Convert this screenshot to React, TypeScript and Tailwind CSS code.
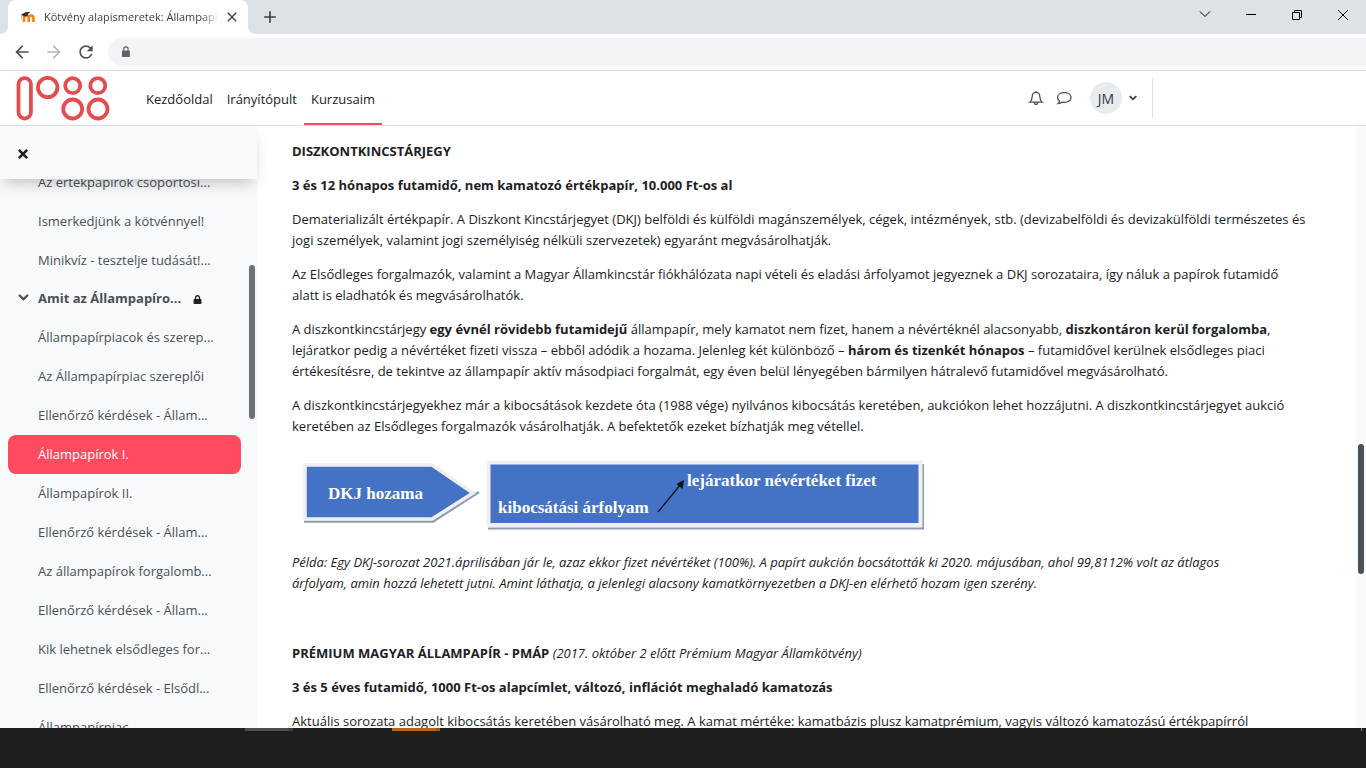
import { FaChevronDown, FaLock, FaTimes } from "react-icons/fa";
import { MdAdd, MdArrowBack, MdArrowForward, MdClose, MdRefresh } from "react-icons/md";

const lessons = [
  { title: "Az értékpapírok csoportosí..." },
  { title: "Ismerkedjünk a kötvénnyel!" },
  { title: "Minikvíz - tesztelje tudását!..." },
  { title: "Amit az Állampapíro...", section: true },
  { title: "Állampapírpiacok és szerep..." },
  { title: "Az Állampapírpiac szereplői" },
  { title: "Ellenőrző kérdések - Állam..." },
  { title: "Állampapírok I.", active: true },
  { title: "Állampapírok II." },
  { title: "Ellenőrző kérdések - Állam..." },
  { title: "Az állampapírok forgalomb..." },
  { title: "Ellenőrző kérdések - Állam..." },
  { title: "Kik lehetnek elsődleges for..." },
  { title: "Ellenőrző kérdések - Elsődl..." },
  { title: "Állampapírpiac" },
];

function TabStrip() {
  return (
    <div className="flex h-[34px] shrink-0 items-end bg-[#dee1e6]">
      <span className="h-2 w-2 bg-white">
        <span className="block h-2 w-2 rounded-br-lg bg-[#dee1e6]" />
      </span>
      <div className="flex h-[34px] w-60 items-center rounded-t-lg bg-white pl-3 pr-1">
        <svg viewBox="0 0 16 16" className="h-4 w-4 shrink-0">
          <path d="M4 13V8.800a2.300 2.300 0 0 1 4.700 0V13M8.700 8.800a2.300 2.300 0 0 1 4.700 0V13" fill="none" stroke="#f98012" strokeWidth="2.6" />
          <path d="M1 5.500 6 3 10.500 3 8 5 7.500 7 4 7.500z" fill="#333" />
          <path d="M1.500 6v4" stroke="#b9a68c" strokeWidth="0.8" />
        </svg>
        <span className="ml-2 w-[175px] overflow-hidden whitespace-nowrap text-[11px] text-[#3c4043] [mask-image:linear-gradient(to_right,black_90%,transparent)]">
          Kötvény alapismeretek: Állampapírok
        </span>
        <button aria-label="Lap bezárása" className="ml-[3px] flex h-5 w-5 items-center justify-center text-[#3c4043]">
          <MdClose size={16} />
        </button>
      </div>
      <span className="h-2 w-2 bg-white">
        <span className="block h-2 w-2 rounded-bl-lg bg-[#dee1e6]" />
      </span>
      <button aria-label="Új lap" className="flex h-[34px] w-7 items-center justify-center text-[#3c4043]">
        <MdAdd size={20} />
      </button>
      <div className="ml-auto flex h-7 text-black">
        <button aria-label="Lapok keresése" className="flex w-[46px] justify-center pt-1">
          <svg viewBox="0 0 12 12" className="h-3 w-3" fill="none" stroke="currentColor"><path d="M1 1.5 6 6.5 11 1.5" /></svg>
        </button>
        <button aria-label="Kis méret" className="flex w-[46px] justify-center pt-1">
          <svg viewBox="0 0 12 12" className="h-3 w-3" fill="none" stroke="currentColor"><path d="M1 4.5H11" /></svg>
        </button>
        <button aria-label="Előző méret" className="flex w-[46px] justify-center pt-1">
          <svg viewBox="0 0 12 12" className="h-3 w-3" fill="none" stroke="currentColor"><path d="M1.5 2.5h7v7h-7zM3.5 2.5v-2h7v7h-2" /></svg>
        </button>
        <button aria-label="Bezárás" className="flex w-[46px] justify-center pt-1">
          <svg viewBox="0 0 12 12" className="h-3 w-3" fill="none" stroke="currentColor"><path d="M1 0 11 10M11 0 1 10" /></svg>
        </button>
      </div>
    </div>
  );
}

function AddressBar() {
  return (
    <div className="flex h-[37px] shrink-0 items-center border-b border-[#dadce0] bg-white pl-3">
      <button aria-label="Vissza" className="mr-3 text-[#4f5358]"><MdArrowBack size={20} /></button>
      <button aria-label="Előre" className="mr-3 text-[#b4b8bd]"><MdArrowForward size={20} /></button>
      <button aria-label="Újratöltés" className="mr-3 text-[#4f5358]"><MdRefresh size={20} /></button>
      <label className="flex h-7 flex-1 items-center rounded-l-full bg-[#f1f3f4] pl-3 text-[#5f6368]">
        <svg viewBox="0 0 12 12" className="h-3 w-3" fill="none" stroke="currentColor">
          <rect x="2" y="4.500" width="8" height="6.500" rx="0.500" fill="currentColor" stroke="none" />
          <path d="M3.800 5V3a2.200 2.200 0 0 1 4.400 0v2" strokeWidth="1.200" />
        </svg>
        <input aria-label="Címsor" className="ml-2 w-full bg-transparent text-xs outline-none" />
      </label>
    </div>
  );
}

function Logo() {
  return (
    <svg viewBox="0 0 94 46" className="h-[46px] w-[94px]" fill="none" stroke="#e34d50" strokeWidth="3.8">
      <rect x="2.5" y="3.100" width="12.400" height="40.400" rx="6.200" />
      <circle cx="31.7" cy="12.500" r="9.700" />
      <circle cx="56.7" cy="10.700" r="7.500" />
      <circle cx="81.8" cy="10.700" r="7.500" />
      <circle cx="56.7" cy="34" r="9.500" />
      <circle cx="82" cy="34" r="9.500" />
    </svg>
  );
}

function Navbar() {
  return (
    <header className="flex h-[55px] shrink-0 items-stretch border-b border-[#dee2e6] bg-white">
      <a href="#" aria-label="1088" className="flex items-center pl-4"><Logo /></a>
      <nav className="ml-[29px] flex text-[13px] text-[#1d2125]">
        <a href="#" className="flex items-center border-b-2 border-transparent px-[7px] pt-[6px]">Kezdőoldal</a>
        <a href="#" className="flex items-center border-b-2 border-transparent px-[7px] pt-[6px]">Irányítópult</a>
        <a href="#" className="flex items-center border-b-2 border-[#ff4a5f] px-[7px] pt-[6px]">Kurzusaim</a>
      </nav>
      <div className="ml-auto mr-[213px] flex items-center">
        <button aria-label="Értesítések" className="text-[#495057]">
          <svg viewBox="0 0 16 16" className="h-4 w-4" fill="none" stroke="currentColor" strokeWidth="1.3">
            <path d="M8 1v1.3M1.8 12.2h12.4C12.2 10.600 11.900 9 11.800 6.500 11.700 4 10.200 2.400 8 2.400S4.300 4 4.200 6.500C4.100 9 3.800 10.600 1.800 12.200zM6.300 12.800a1.700 1.700 0 0 0 3.400 0" />
          </svg>
        </button>
        <button aria-label="Üzenetek" className="ml-3 text-[#495057]">
          <svg viewBox="0 0 16 16" className="h-4 w-4" fill="none" stroke="currentColor" strokeWidth="1.3">
            <path d="M8.300 2.700c3.800 0 6.700 2 6.700 4.800s-2.900 4.800-6.700 4.800c-.7 0-1.300-.1-1.900-.2-1.200 1-2.600 1.600-4.400 1.600.8-.7 1.300-1.400 1.500-2.600C2.300 10.200 1.600 9 1.600 7.500c0-2.800 2.900-4.800 6.700-4.800z" />
          </svg>
        </button>
        <button className="ml-[18px] flex items-center gap-[7px] text-sm text-[#343a40]">
          <span className="flex h-8 w-8 items-center justify-center rounded-full bg-[#e9ecef] pt-[2px]">JM</span>
          <FaChevronDown size={8} stroke="currentColor" strokeWidth="40" />
        </button>
        <span className="ml-[15px] h-10 w-px bg-[#dee2e6]" />
      </div>
    </header>
  );
}

function Sidebar() {
  return (
    <aside className="flex w-[257px] shrink-0 flex-col bg-[#f8f9fa]">
      <div className="z-10 flex h-[53px] shrink-0 items-center bg-[#f8f9fa] pl-4 pt-[2px] shadow-[0_8px_14px_-4px_rgba(0,0,0,0.22)]">
        <button aria-label="Kurzusindex bezárása" className="text-[#1d2125]"><FaTimes size={14} /></button>
      </div>
      <div className="flex min-h-0 flex-1 overflow-hidden">
        <ul className="-mt-4 ml-2 w-[233px] shrink-0 text-[13px] text-[#495057]">
          {lessons.map((l, i) =>
            l.section ? (
              <li key={i} className="flex h-[38px] items-center pl-[10px]">
                <button aria-label="Összecsukás" className="w-5 pb-1"><FaChevronDown size={11} stroke="currentColor" strokeWidth="30" /></button>
                <a href="#" className="font-bold">{l.title}</a>
                <FaLock size={9} className="ml-3 text-[#1d2125]" />
              </li>
            ) : (
              <li key={i}>
                <a
                  href="#"
                  className={
                    l.active
                      ? "flex h-[39px] items-center rounded-lg bg-[#ff4a5f] pl-[30px] text-white"
                      : "flex h-[39px] items-center pl-[30px]"
                  }
                >
                  {l.title}
                </a>
              </li>
            )
          )}
        </ul>
        <span className="ml-2 mt-[86px] h-[154px] w-[6px] shrink-0 rounded-full bg-[#6a737b]" />
      </div>
    </aside>
  );
}

function YieldDiagram() {
  return (
    <svg viewBox="0 0 640 84" className="mb-[18px] mt-[13px] block h-[84px] w-[640px] font-['Liberation_Serif',serif]">
      <path d="M12 71.500H141L187 42" fill="none" stroke="#8e9bb3" strokeWidth="2.500" />
      <path d="M13 15H140L181 43 140 69H13z" fill="#4472c4" stroke="#f0f0f0" strokeWidth="3.500" />
      <path d="M196 78.500H631V14" fill="none" stroke="#8e9bb3" strokeWidth="2" />
      <path d="M196.500 12.500H628.500V75H196.500z" fill="#4472c4" stroke="#f0f0f0" strokeWidth="4" />
      <text x="36" y="49" fontSize="17" fontWeight="bold" fill="#fff">DKJ hozama</text>
      <text x="206" y="63" fontSize="17" fontWeight="bold" fill="#fff">kibocsátási árfolyam</text>
      <text x="395" y="36" fontSize="17" fontWeight="bold" fill="#fff">lejáratkor névértéket fizet</text>
      <path d="M366 62 389 34" stroke="#111" strokeWidth="1.300" />
      <path d="M392 30 390.500 39 384.500 34z" fill="#111" />
    </svg>
  );
}

function Article() {
  return (
    <main className="min-w-0 flex-1 overflow-hidden pl-[35px] pt-[15px] text-[13px] leading-[21px] text-[#1d2125]">
      <div className="flex flex-col gap-[13px] whitespace-nowrap">
        <h2 className="font-bold">DISZKONTKINCSTÁRJEGY</h2>
        <h3 className="font-bold">3 és 12 hónapos futamidő, nem kamatozó értékpapír, 10.000 Ft-os al</h3>
        <p>
          Dematerializált értékpapír. A Diszkont Kincstárjegyet (DKJ) belföldi és külföldi magánszemélyek, cégek, intézmények, stb. (devizabelföldi és devizakülföldi természetes és<br />
          jogi személyek, valamint jogi személyiség nélküli szervezetek) egyaránt megvásárolhatják.
        </p>
        <p>
          Az Elsődleges forgalmazók, valamint a Magyar Államkincstár fiókhálózata napi vételi és eladási árfolyamot jegyeznek a DKJ sorozataira, így náluk a papírok futamidő<br />
          alatt is eladhatók és megvásárolhatók.
        </p>
        <p>
          A diszkontkincstárjegy <b>egy évnél rövidebb futamidejű</b> állampapír, mely kamatot nem fizet, hanem a névértéknél alacsonyabb, <b>diszkontáron kerül forgalomba</b>,<br />
          lejáratkor pedig a névértéket fizeti vissza – ebből adódik a hozama. Jelenleg két különböző – <b>három és tizenkét hónapos</b> – futamidővel kerülnek elsődleges piaci<br />
          értékesítésre, de tekintve az állampapír aktív másodpiaci forgalmát, egy éven belül lényegében bármilyen hátralevő futamidővel megvásárolható.
        </p>
        <p>
          A diszkontkincstárjegyekhez már a kibocsátások kezdete óta (1988 vége) nyilvános kibocsátás keretében, aukciókon lehet hozzájutni. A diszkontkincstárjegyet aukció<br />
          keretében az Elsődleges forgalmazók vásárolhatják. A befektetők ezeket bízhatják meg vétellel.
        </p>
      </div>
      <YieldDiagram />
      <div className="flex flex-col gap-[13px] whitespace-nowrap">
        <p className="italic">
          Példa: Egy DKJ-sorozat 2021.áprilisában jár le, azaz ekkor fizet névértéket (100%). A papírt aukción bocsátották ki 2020. májusában, ahol 99,8112% volt az átlagos<br />
          árfolyam, amin hozzá lehetett jutni. Amint láthatja, a jelenlegi alacsony kamatkörnyezetben a DKJ-en elérhető hozam igen szerény.
        </p>
        <h2 className="mt-9">
          <b>PRÉMIUM MAGYAR ÁLLAMPAPÍR - PMÁP</b> <i>(2017. október 2 előtt Prémium Magyar Államkötvény)</i>
        </h2>
        <h3 className="font-bold">3 és 5 éves futamidő, 1000 Ft-os alapcímlet, változó, inflációt meghaladó kamatozás</h3>
        <p>Aktuális sorozata adagolt kibocsátás keretében vásárolható meg. A kamat mértéke: kamatbázis plusz kamatprémium, vagyis változó kamatozású értékpapírról</p>
      </div>
    </main>
  );
}

export default function App() {
  return (
    <div className="flex h-screen flex-col overflow-hidden bg-white font-['Open_Sans',sans-serif]">
      <TabStrip />
      <AddressBar />
      <Navbar />
      <div className="flex min-h-0 flex-1">
        <Sidebar />
        <Article />
        <div className="w-[10px] shrink-0 bg-[#f8f9fa] px-[2px] pt-[318px]">
          <span className="block h-[130px] rounded-full bg-[#495057]" />
        </div>
      </div>
      {/* Taskbar */}
      <footer className="flex h-10 shrink-0 bg-[#1e1e1e] pl-[245px]">
        <span className="h-[3px] w-11 bg-[#4d4d4d]" />
        <span className="h-[3px] w-1 bg-[#3a3a3a]" />
        <span className="ml-[99px] h-[3px] w-11 bg-[#b5651d]" />
        <span className="h-[3px] w-1 bg-[#9c5a1e]" />
        <span className="ml-auto mr-1 h-[3px] w-px bg-[#8a8a8a]" />
      </footer>
    </div>
  );
}
